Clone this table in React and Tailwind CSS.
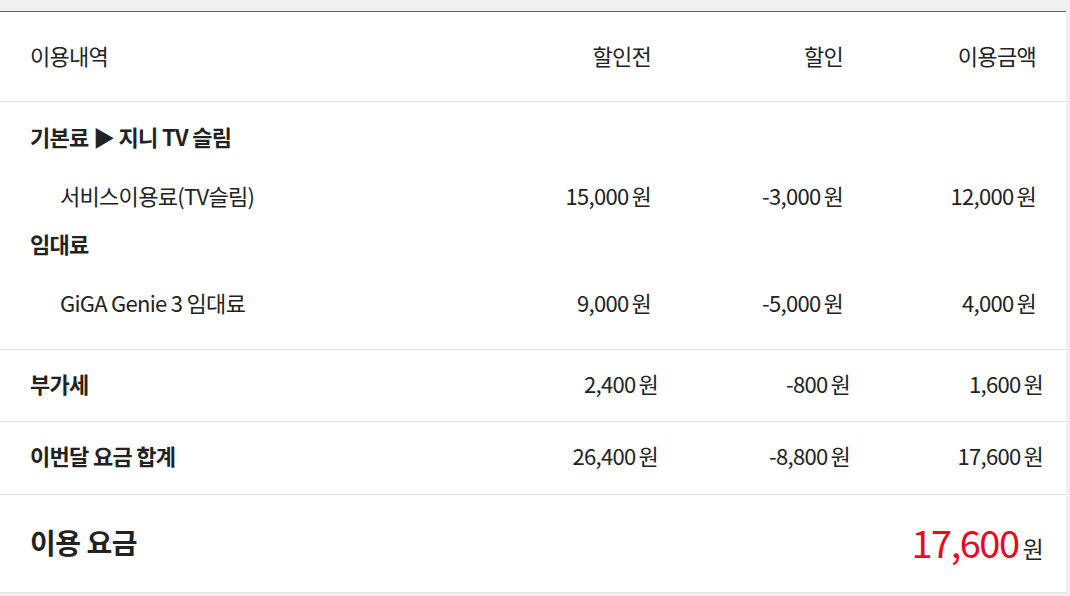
import React from 'react';

const font = { fontFamily: '"Noto Sans CJK KR", "Noto Sans", sans-serif' };

const items = [
  { group: '기본료 ▶ 지니 TV 슬림', name: '서비스이용료(TV슬림)', before: '15,000', disc: '-3,000', amount: '12,000' },
  { group: '임대료', name: 'GiGA Genie 3 임대료', before: '9,000', disc: '-5,000', amount: '4,000' },
];

const totals = [
  { label: '부가세', before: '2,400', disc: '-800', amount: '1,600' },
  { label: '이번달 요금 합계', before: '26,400', disc: '-8,800', amount: '17,600' },
];

function Won({ v }) {
  return (
    <span className="whitespace-nowrap">
      {v}<span className="ml-[3px]">원</span>
    </span>
  );
}

export default function App() {
  return (
    <div className="w-[1070px] h-[596px] bg-[#f0f0f0] pt-[11px] overflow-hidden text-[#222] tracking-[-0.7px]" style={font}>
      <div className="w-[1066px] bg-white border-t border-[#666] border-b border-b-[#e2e2e2]">

        {/* Header */}
        <div className="h-[90px] flex items-center pl-[30px] pr-[30px] pb-[2px] text-[22px] border-b border-[#ddd]">
          <div className="flex-1">이용내역</div>
          <div className="w-[192px] text-right">할인전</div>
          <div className="w-[192px] text-right">할인</div>
          <div className="w-[193px] text-right">이용금액</div>
        </div>

        {/* Items */}
        <div className="pt-[19px] pb-[32px] pl-[30px] pr-[30px] border-b border-[#ddd]">
          {items.map((it, i) => (
            <div key={i} className={i > 0 ? 'mt-[18px]' : ''}>
              <div className="h-[30px] leading-[30px] text-[22px] font-bold">{it.group}</div>
              <div className="mt-[29px] h-[30px] flex items-center text-[22px]">
                <div className="flex-1 pl-[30px]">{it.name}</div>
                <div className="w-[192px] text-right"><Won v={it.before} /></div>
                <div className="w-[192px] text-right"><Won v={it.disc} /></div>
                <div className="w-[193px] text-right"><Won v={it.amount} /></div>
              </div>
            </div>
          ))}
        </div>

        {/* Totals */}
        {totals.map((t, i) => (
          <div key={i} className={`flex items-center pl-[30px] pr-[23px] pb-[5px] text-[22px] border-b border-[#ddd] ${i === 0 ? 'h-[72px]' : 'h-[73px]'}`}>
            <div className="flex-1 font-bold">{t.label}</div>
            <div className="w-[192px] text-right"><Won v={t.before} /></div>
            <div className="w-[192px] text-right"><Won v={t.disc} /></div>
            <div className="w-[193px] text-right"><Won v={t.amount} /></div>
          </div>
        ))}

        {/* Final */}
        <div className="h-[97px] flex items-center pl-[30px] pr-[23px] pb-[4px]">
          <div className="flex-1 text-[28px] font-bold tracking-[-0.5px]">이용 요금</div>
          <div className="flex items-baseline">
            <span className="text-[38px] text-[#e60a22] tracking-[-1.5px]">17,600</span>
            <span className="ml-[4px] text-[23px]">원</span>
          </div>
        </div>
      </div>
    </div>
  );
}
